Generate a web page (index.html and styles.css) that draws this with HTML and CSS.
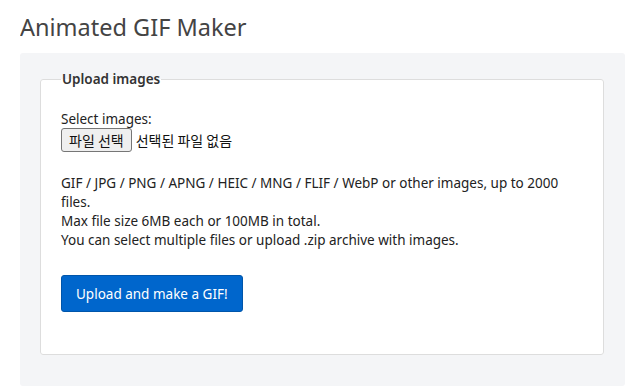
FILE: index.html
```html
<!DOCTYPE html>
<html lang="en">
<head>
    <meta charset="UTF-8">
    <meta name="viewport" content="width=device-width, initial-scale=1.0">
    <title>Animated GIF Maker</title>
    <link rel="stylesheet" href="styles.css">
</head>
<body>
    <h1 class="page-title">Animated GIF Maker</h1>

    <div class="panel">
        <form class="upload-form" action="#" method="post" enctype="multipart/form-data">
            <fieldset class="upload-box">
                <legend>Upload images</legend>

                <label for="files">Select images:</label><br>
                <span class="file-picker">
                    <input type="file" id="files" name="files[]" multiple>
                    <label for="files" class="file-btn">파일 선택</label>
                    <span class="file-name">선택된 파일 없음</span>
                </span>

                <p class="hint">
                    GIF / JPG / PNG / APNG / HEIC / MNG / FLIF / WebP or other images, up to 2000 files.<br>
                    Max file size 6MB each or 100MB in total.<br>
                    You can select multiple files or upload .zip archive with images.
                </p>

                <button type="submit" class="btn-primary">Upload and make a GIF!</button>
            </fieldset>
        </form>
    </div>
</body>
</html>
```

FILE: styles.css
```css
body { font-family: "Noto Sans", "Noto Sans CJK KR", sans-serif; font-size: 13.5px; color: #222; margin: 0 10px 0 20px; background: #fff; }
.page-title { font-size: 23.5px; font-weight: normal; color: #444; margin: 0; padding-top: 11px; line-height: 32px; height: 42px; }
.panel { background: #f4f5f7; border-radius: 3px; padding: 16px 21px 31px 20px; }
.upload-form { margin: 0; }
.upload-box { margin: 0; padding: 0 20px 42px 20px; background: #fff; border: 1px solid #ddd; border-radius: 3px; line-height: 19px; }
.upload-box legend { font-weight: 600; color: #333; padding: 0 1px; margin: 0; line-height: 20px; }
.upload-box > label { display: inline-block; margin-top: 21px; }
.file-picker { display: inline-flex; align-items: center; gap: 4px; margin-top: -1px; font-family: "Noto Sans CJK KR", sans-serif; font-size: 14px; }
.file-picker input[type=file] { display: none; }
.file-btn { display: inline-block; padding: 0 7px; height: 22px; line-height: 22px; background: #efefef; border: 1px solid #767676; border-radius: 3px; color: #111; cursor: pointer; }
.file-btn:hover { background: #e5e5e5; }
.file-name { color: #111; }
.hint { margin: 22px 0 25px; }
.btn-primary { font-family: inherit; font-size: 13.5px; color: #fff; background: #0066cc; border: 1px solid #0055aa; border-radius: 3px; height: 37px; padding: 0 14px; cursor: pointer; }
.btn-primary:hover { background: #0056b3; }
```
